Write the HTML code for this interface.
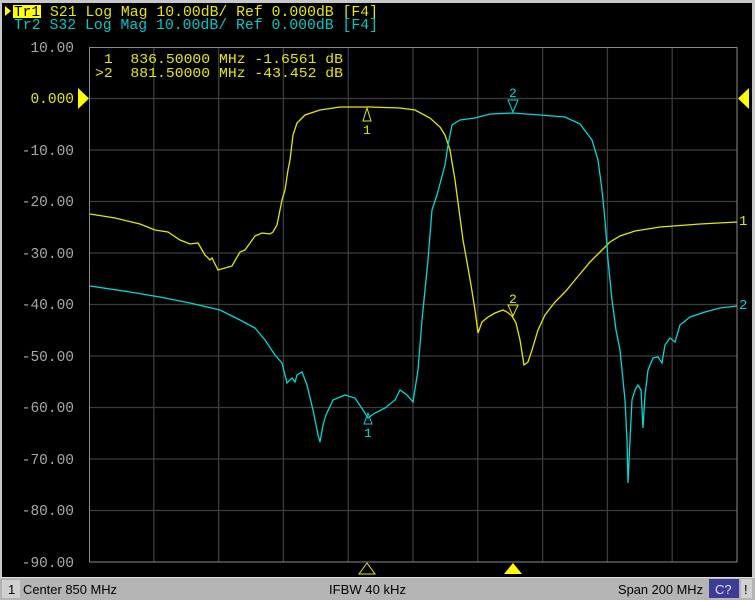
<!DOCTYPE html>
<html><head><meta charset="utf-8"><style>
html,body{margin:0;padding:0;background:#000;width:755px;height:600px;overflow:hidden}
svg{display:block}
text{font-family:"Liberation Mono","DejaVu Sans Mono",monospace}
.s{font-family:"Liberation Sans",sans-serif;font-size:13px;fill:#000}
</style></head><body>
<svg width="755" height="600" viewBox="0 0 755 600">
<rect x="0" y="0" width="755" height="600" fill="#000"/>
<rect x="0" y="0" width="755" height="3" fill="#c8c8c8"/>
<rect x="752" y="0" width="3" height="578" fill="#c8c8c8"/>
<rect x="0" y="0" width="2" height="578" fill="#c8c8c8"/>
<!-- header -->
<polygon points="5,6 11,11 5,16" fill="#ff0"/>
<rect x="13" y="5" width="28" height="13" fill="#ff0"/>
<text x="14" y="16" font-size="14.7" fill="#000" textLength="26" lengthAdjust="spacingAndGlyphs">Tr1</text>
<text x="50" y="16" font-size="14.7" fill="#e6e600" xml:space="preserve" textLength="328" lengthAdjust="spacingAndGlyphs">S21 Log Mag 10.00dB/ Ref 0.000dB [F4]</text>
<text x="14" y="29" font-size="14.7" fill="#00c8c8" xml:space="preserve" textLength="364" lengthAdjust="spacingAndGlyphs">Tr2 S32 Log Mag 10.00dB/ Ref 0.000dB [F4]</text>
<!-- grid -->
<g stroke="#3c3c3c" stroke-width="1.3">
<line x1="153.8" y1="47" x2="153.8" y2="562"/><line x1="218.6" y1="47" x2="218.6" y2="562"/>
<line x1="283.4" y1="47" x2="283.4" y2="562"/><line x1="348.2" y1="47" x2="348.2" y2="562"/>
<line x1="413" y1="47" x2="413" y2="562"/><line x1="477.8" y1="47" x2="477.8" y2="562"/>
<line x1="542.6" y1="47" x2="542.6" y2="562"/><line x1="607.4" y1="47" x2="607.4" y2="562"/>
<line x1="672.2" y1="47" x2="672.2" y2="562"/>
<line x1="89" y1="98.5" x2="737" y2="98.5"/><line x1="89" y1="150" x2="737" y2="150"/>
<line x1="89" y1="201.5" x2="737" y2="201.5"/><line x1="89" y1="253" x2="737" y2="253"/>
<line x1="89" y1="304.5" x2="737" y2="304.5"/><line x1="89" y1="356" x2="737" y2="356"/>
<line x1="89" y1="407.5" x2="737" y2="407.5"/><line x1="89" y1="459" x2="737" y2="459"/>
<line x1="89" y1="510.5" x2="737" y2="510.5"/>
</g>
<rect x="89.5" y="47.5" width="647.5" height="514.5" fill="none" stroke="#8a8a8a" stroke-width="1"/>
<!-- y labels -->
<g font-size="14.5" fill="#a8a8a8" text-anchor="end">
<text x="74" y="52">10.00</text>
<text x="74" y="155">-10.00</text><text x="74" y="206">-20.00</text>
<text x="74" y="258">-30.00</text><text x="74" y="309">-40.00</text>
<text x="74" y="361">-50.00</text><text x="74" y="412">-60.00</text>
<text x="74" y="464">-70.00</text><text x="74" y="515">-80.00</text>
<text x="74" y="567">-90.00</text>
</g>
<text x="74" y="103" font-size="14.5" fill="#e6e600" text-anchor="end">0.000</text>
<polygon points="78,88 89,98.5 78,109" fill="#ff0"/>
<polygon points="749,88 738,98.5 749,109" fill="#ff0"/>
<!-- marker readout -->
<text x="95" y="63" font-size="13.4" fill="#e6e600" xml:space="preserve" textLength="248" lengthAdjust="spacingAndGlyphs"> 1  836.50000 MHz -1.6561 dB</text>
<text x="95" y="77" font-size="13.4" fill="#e6e600" xml:space="preserve" textLength="248" lengthAdjust="spacingAndGlyphs">&gt;2  881.50000 MHz -43.452 dB</text>
<!-- traces -->
<polyline fill="none" stroke="#e6e600" stroke-width="1.3" points="90,214 115,218 140,224 155,230 168,232 180,240 190,244 198,243 205,255 210,260 212,258 218,270 225,268 232,266 240,252 245,250 255,236 262,233 270,234 273,232 277,225 280,210 282,200 285,190 288,170 290,160 293,135 297,123 305,115 320,110 340,107 370,107 400,108 415,110 430,118 440,127 445,135 450,150 455,180 459,210 463,240 467,262 471,285 475,310 478,333 482,322 488,317 495,313 503,310 507,312 512,316 516,323 520,340 524,365 528,362 532,350 538,330 545,315 555,302 565,292 575,280 590,262 600,252 610,242 620,236 635,231 660,227 700,224 737,222"/>
<polyline fill="none" stroke="#00d8d8" stroke-width="1.3" points="90,286 130,292 160,297 190,303 220,310 240,320 255,328 265,340 275,355 282,363 287,383 292,378 295,382 297,375 302,372 307,385 313,410 318,435 320,442 323,425 326,415 333,400 345,395 355,398 363,410 368,418 375,413 385,408 395,400 400,390 407,395 413,402 418,370 422,320 425,290 428,260 432,210 437,195 441,180 445,165 448,145 452,125 460,120 475,118 490,114 513,113 540,115 565,117 580,124 592,140 598,160 602,190 605,220 608,260 612,300 616,330 620,350 623,380 625,400 627,440 628,483 630,440 632,400 635,390 638,385 641,390 643,428 645,395 648,370 653,358 658,357 662,363 665,345 670,338 675,342 680,325 690,317 705,312 720,308 737,306"/>
<!-- markers -->
<polygon points="367,108 363,121 371,121" fill="none" stroke="#e6e600" stroke-width="1"/>
<text x="363" y="134" font-size="13" fill="#e6e600">1</text>
<polygon points="513,112 508,100 518,100" fill="none" stroke="#00d8d8" stroke-width="1"/>
<text x="509" y="97" font-size="13" fill="#00d8d8">2</text>
<polygon points="513,316 508,305 518,305" fill="none" stroke="#e6e600" stroke-width="1"/>
<text x="509" y="303" font-size="13" fill="#e6e600">2</text>
<polygon points="368,413 364,424 372,424" fill="none" stroke="#00d8d8" stroke-width="1"/>
<text x="364" y="437" font-size="13" fill="#00d8d8">1</text>
<text x="739" y="225" font-size="14" fill="#e6e600">1</text>
<text x="739" y="309" font-size="14" fill="#00d8d8">2</text>
<!-- bottom markers -->
<polygon points="367,563 359,574 375,574" fill="none" stroke="#e6e600" stroke-width="1"/>
<polygon points="513,563 504,574 522,574" fill="#ff0"/>
<!-- status bar -->
<rect x="0" y="577" width="755" height="23" fill="#b4b4b4"/>
<rect x="0" y="577" width="755" height="1" fill="#e0e0e0"/>
<rect x="2" y="580" width="18" height="18" fill="#d0d0d0"/>
<text class="s" x="8" y="594">1</text>
<text class="s" x="23" y="594" textLength="94" lengthAdjust="spacingAndGlyphs">Center 850 MHz</text>
<text class="s" x="329" y="594" textLength="77" lengthAdjust="spacingAndGlyphs">IFBW 40 kHz</text>
<text class="s" x="618" y="594" textLength="85" lengthAdjust="spacingAndGlyphs">Span 200 MHz</text>
<rect x="709" y="579" width="30" height="19" fill="#3c3c96"/>
<text class="s" x="715" y="594" style="fill:#e0e0ff">C?</text>
<rect x="741" y="579" width="11" height="19" fill="#d0d0d0"/>
<text class="s" x="744" y="594">!</text>
</svg>
</body></html>
